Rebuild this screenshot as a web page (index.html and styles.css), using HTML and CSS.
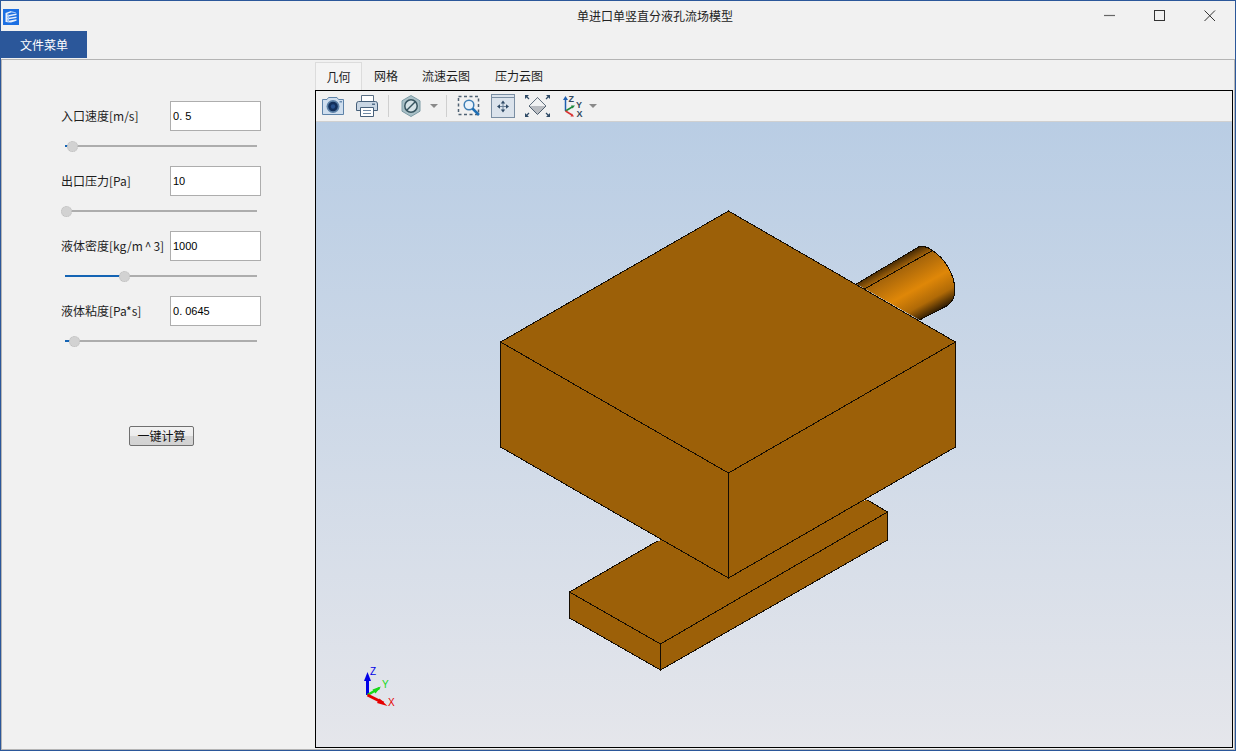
FILE: index.html
```html
<!DOCTYPE html>
<html lang="zh">
<head>
<meta charset="utf-8">
<title>单进口单竖直分液孔流场模型</title>
<link rel="stylesheet" href="styles.css">
</head>
<body>
<div class="window">
  <header class="titlebar">
    <svg class="app-icon" width="16" height="16" viewBox="0 0 16 16">
      <rect width="16" height="16" fill="#1b6fe3"/>
      <path d="M2.500 4 8 2V3.500L4.500 4.800V6.200L13.500 4.500V6L4.500 7.700V9.100L13.500 7.400V8.900L4.500 10.600V12L13.500 10.300V11.800L8 13.500 2.500 13Z" fill="#e8f0fc"/>
      <path d="M8 2 13 3.500V4.200L8 3.500ZM4.500 5.500H6V13.300H4.500Z" fill="#a7c8f6"/>
    </svg>
    <div class="title">单进口单竖直分液孔流场模型</div>
    <div class="controls">
      <div class="control"><svg width="12" height="12" viewBox="0 0 12 12"><path d="M0 5.500H11" stroke="#666" stroke-width="1.200"/></svg></div>
      <div class="control"><svg width="12" height="12" viewBox="0 0 12 12"><rect x=".5" y=".5" width="10" height="10" fill="none" stroke="#333"/></svg></div>
      <div class="control"><svg width="12" height="12" viewBox="0 0 12 12"><path d="M.5.500 11 11M11 .5.500 11" stroke="#333" fill="none"/></svg></div>
    </div>
  </header>
  <nav class="menubar"><div class="menu-tab">文件菜单</div></nav>
  <main class="frame">
    <aside class="panel">
      <div class="field">
        <div class="field-row"><label class="field-label">入口速度[m/s]</label><div class="field-input">0<span class="wide-dot">.</span>5</div></div>
        <div class="slider"><div class="slider-fill" style="width:7px"></div><div class="slider-thumb" style="left:2px"></div></div>
      </div>
      <div class="field">
        <div class="field-row"><label class="field-label">出口压力[Pa]</label><div class="field-input">10</div></div>
        <div class="slider"><div class="slider-fill" style="width:1px"></div><div class="slider-thumb" style="left:-4px"></div></div>
      </div>
      <div class="field">
        <div class="field-row"><label class="field-label">液体密度[kg/m<span class="caret">^</span>3]</label><div class="field-input">1000</div></div>
        <div class="slider"><div class="slider-fill" style="width:59px"></div><div class="slider-thumb" style="left:54px"></div></div>
      </div>
      <div class="field">
        <div class="field-row"><label class="field-label">液体粘度[Pa*s]</label><div class="field-input">0<span class="wide-dot">.</span>0645</div></div>
        <div class="slider"><div class="slider-fill" style="width:9px"></div><div class="slider-thumb" style="left:4px"></div></div>
      </div>
      <button class="run-btn">一键计算</button>
    </aside>
    <section class="workspace">
      <div class="tabs">
        <div class="tab tab-active">几何</div>
        <div class="tab">网格</div>
        <div class="tab">流速云图</div>
        <div class="tab">压力云图</div>
      </div>
      <div class="viewer">
        <div class="toolbar">
          <div class="tool">
            <svg width="24" height="20" viewBox="0 0 24 20">
              <path d="M1.500 3.500H6L7.500 1.500H16L17.500 3.500H22.500V18.500H1.500Z" fill="#cfdeee" stroke="#5d82a8"/>
              <rect x="18.500" y="5" width="2.500" height="1.500" fill="#6c8db0"/>
              <circle cx="12" cy="10.500" r="6.500" fill="#5d82a8"/>
              <circle cx="12" cy="10.500" r="4.800" fill="#13305c"/>
              <circle cx="12" cy="10.500" r="2.200" fill="#27508c"/>
            </svg>
          </div>
          <div class="tool">
            <svg width="24" height="24" viewBox="0 0 24 24">
              <path d="M6.500 8V1.500H18.500V8" fill="#fff" stroke="#5a6f84"/>
              <path d="M3.500 7.500H20.500Q22.500 7.500 22.500 10V16.500H1.500V10Q1.500 7.500 3.500 7.500Z" fill="#c9d6e3" stroke="#47607a"/>
              <rect x="17" y="9.500" width="3" height="1.500" fill="#55708c"/>
              <path d="M5.500 13.500H18.500V22.500H5.500Z" fill="#fff" stroke="#47607a"/>
              <path d="M8 16.500H16M8 19.500H16" stroke="#6f8aa5"/>
            </svg>
          </div>
          <div class="tool-sep"></div>
          <div class="tool tool-hex">
            <svg width="20" height="22" viewBox="0 0 20 22">
              <path d="M10 .5 19 5.800V16.200L10 21.500 1 16.200V5.800Z" fill="#a9c0c7" stroke="#7c9ba5"/>
              <circle cx="10" cy="11" r="6.200" fill="#d5e2e6" stroke="#37545f" stroke-width="1.500"/>
              <path d="M6 15 14 7" stroke="#37545f" stroke-width="1.500"/>
            </svg>
          </div>
          <div class="tool-arrow"></div>
          <div class="tool-sep tool-sep-wide"></div>
          <div class="tool">
            <svg width="24" height="24" viewBox="0 0 24 24">
              <rect x="1.500" y="2.500" width="20" height="18" fill="none" stroke="#4f6273" stroke-width="1.500" stroke-dasharray="3 2.500"/>
              <circle cx="12" cy="11" r="4.800" fill="#eaf3fb" stroke="#3f7fb5" stroke-width="1.500"/>
              <path d="M15.500 14.500 22 21" stroke="#1f6fb5" stroke-width="2.500"/>
            </svg>
          </div>
          <div class="tool">
            <svg width="24" height="24" viewBox="0 0 24 24">
              <rect x=".5" y=".5" width="23" height="23" fill="#dbe3ec" stroke="#7a8ea3"/>
              <path d="M1 3.500H23" stroke="#7a8ea3"/>
              <path d="M12 9V16M8.500 12.500H15.500" stroke="#6b8097"/>
              <path d="M12 6.500 9.800 9.500H14.200ZM12 18.500 9.800 15.500H14.200ZM6 12.500 9 10.300V14.700ZM18 12.500 15 10.300V14.700Z" fill="#2f4a66"/>
            </svg>
          </div>
          <div class="tool">
            <svg width="28" height="24" viewBox="0 0 28 24">
              <path d="M14.500 3.500 23 12 14.500 20.500 6 12Z" fill="#b9bcc1" stroke="#4e5e6e"/>
              <path d="M14.500 4 22.500 12H6.500Z" fill="#f1f2f3"/>
              <path d="M3 2 6 5M26 2 23 5M3 22 6 19M26 22 23 19" stroke="#2f4a66" stroke-width="1.200"/>
              <path d="M2 1H6L2 5ZM27 1H23L27 5ZM2 23H6L2 19ZM27 23H23L27 19Z" fill="#2f4a66"/>
            </svg>
          </div>
          <div class="tool tool-axes">
            <svg width="22" height="24" viewBox="0 0 22 24">
              <path d="M4.500 4V17" stroke="#1f5fb0" stroke-width="1.500"/>
              <path d="M4.500 2 2 6H7Z" fill="#1f5fb0"/>
              <path d="M4.500 17 12 12.500" stroke="#1f8a3c" stroke-width="1.500"/>
              <path d="M14 11.500 10 11.500 11.500 14.500Z" fill="#1f8a3c"/>
              <path d="M4.500 17 11 21" stroke="#d93434" stroke-width="1.500"/>
              <path d="M13 22.500 9.500 22.500 11 19.500Z" fill="#d93434"/>
              <text class="axis-letter" x="7.500" y="7.500">Z</text>
              <text class="axis-letter" x="15" y="13.500">Y</text>
              <text class="axis-letter" x="15.500" y="22.500">X</text>
            </svg>
          </div>
          <div class="tool-arrow tool-arrow-last"></div>
        </div>
        <div class="canvas">
          <svg class="scene" viewBox="316.500 122 916 625" preserveAspectRatio="none">
            <defs>
              <linearGradient id="cyl" gradientUnits="userSpaceOnUse" x1="888" y1="262" x2="921" y2="321">
                <stop offset="0" stop-color="#2e1b02"/>
                <stop offset=".18" stop-color="#a5640a"/>
                <stop offset=".55" stop-color="#df8708"/>
                <stop offset=".8" stop-color="#b06a07"/>
                <stop offset="1" stop-color="#2a1903"/>
              </linearGradient>
            </defs>
            <path d="M857 284 919 247Q926 245 932 250 945 258 951 272 956 282 955 292 955 301 947 306L920 320Z" fill="url(#cyl)"/>
            <path class="edge" d="M857 284 919 247Q926 245 932 250 945 258 951 272 956 282 955 292 955 301 947 306L920 320" />
            <path class="edge" d="M865 289 932 251"/>
            <path class="solid" d="M570 592 658 541 868 500 888 512V540L661 670 570 618Z"/>
            <path class="edge" d="M658 541 570 592 661 644 888 512 868 500M570 592V618L661 670 888 540V512M661 644V670"/>
            <path class="solid" d="M729 211 956 342V447L729 578 501 447V342Z"/>
            <path class="edge" d="M729 211 956 342V447L729 578 501 447V342ZM501 342 729 473 956 342M729 473V578"/>
            <path class="axis-z" d="M368 695V676"/>
            <path class="head-z" d="M368 672 364.500 681H371.500Z"/>
            <path class="axis-y" d="M368 695 380 688"/>
            <path class="head-y" d="M381.500 686.500 373 689.500 376 693.500Z"/>
            <path class="axis-x" d="M368 695 384 703"/>
            <path class="head-x" d="M388 706 380 698.500 377.500 703Z"/>
            <text class="triad triad-z" x="370.500" y="675">Z</text>
            <text class="triad triad-y" x="382.500" y="688">Y</text>
            <text class="triad triad-x" x="388.500" y="706">X</text>
          </svg>
        </div>
      </div>
    </section>
  </main>
</div>
</body>
</html>
```

FILE: styles.css
```css
* { box-sizing: border-box; }
html, body { margin: 0; padding: 0; height: 100%; overflow: hidden; }
body {
  font-family: "Noto Sans CJK SC", "Liberation Sans", sans-serif;
  font-size: 12px;
  color: #1e1e1e;
  background: #f1f1f1;
}
.window {
  width: 1236px;
  height: 751px;
  display: flex;
  flex-direction: column;
  border: 1px solid #2b579a;
  background: #f1f1f1;
}
.titlebar {
  height: 30px;
  flex: none;
  display: flex;
  align-items: center;
}
.app-icon { margin: 1px 0 0 2px; flex: none; }
.title {
  flex: 1;
  text-align: center;
  padding-left: 206px;
  color: #222;
  line-height: 30px;
}
.controls { display: flex; flex: none; }
.control {
  width: 50px;
  height: 30px;
  display: flex;
  align-items: center;
  justify-content: center;
}
.menubar { height: 27px; flex: none; display: flex; }
.menu-tab {
  width: 86px;
  background: #2b579a;
  color: #fff;
  text-align: center;
  line-height: 27px;
}
.frame {
  flex: 1;
  min-height: 0;
  display: flex;
  margin-top: 1px;
  border: 1px solid #b4b4b4;
  background: #f1f1f1;
}
.panel {
  width: 313px;
  flex: none;
  display: flex;
  flex-direction: column;
  padding: 41px 0 0 59px;
}
.field { height: 65px; }
.field-row { display: flex; align-items: center; height: 30px; }
.field-label {
  width: 109px;
  flex: none;
  white-space: nowrap;
  line-height: 30px;
}
.caret { margin: 0 2px; }
.field-input {
  width: 91px;
  height: 30px;
  border: 1px solid #adadad;
  background: #fff;
  padding-left: 2px;
  font-family: "Liberation Sans", sans-serif;
  font-size: 11px;
  line-height: 29px;
  color: #000;
}
.wide-dot { letter-spacing: 3px; }
.slider {
  position: relative;
  width: 192px;
  height: 14px;
  margin: 8px 0 0 4px;
  background: linear-gradient(#adadad, #adadad) center / 100% 2px no-repeat;
}
.slider-fill {
  position: absolute;
  left: 0;
  top: 6px;
  height: 2px;
  background: #1464b4;
}
.slider-thumb {
  position: absolute;
  top: 2px;
  width: 11px;
  height: 11px;
  border-radius: 50%;
  background: #d2d2d2;
  border: 1px dotted #bdbdbd;
}
.run-btn {
  align-self: flex-start;
  width: 65px;
  height: 20px;
  margin: 65px 0 0 68px;
  padding: 0;
  border: 1px solid #707070;
  border-radius: 2px;
  background: linear-gradient(#f2f2f2 0%, #ececec 50%, #d6d6d6 51%, #d2d2d2 100%);
  font: inherit;
  line-height: 18px;
  color: #111;
}
.workspace {
  flex: 1;
  min-width: 0;
  display: flex;
  flex-direction: column;
}
.tabs { height: 30px; flex: none; display: flex; padding-top: 2px; }
.tab { padding: 0 12px; line-height: 28px; color: #1e1e1e; white-space: nowrap; }
.tab:last-child { margin-left: 1px; }
.tab-active {
  width: 47px;
  padding: 0;
  text-align: center;
  background: #f4f4f4;
  border: 1px solid #dcdcdc;
  border-bottom: none;
  line-height: 27px;
}
.viewer {
  flex: 1;
  min-height: 0;
  display: flex;
  flex-direction: column;
  border: 1px solid #000;
  margin-right: 1px;
  margin-bottom: 1px;
}
.toolbar {
  height: 31px;
  flex: none;
  display: flex;
  align-items: center;
  background: #f1f1f1;
  border-bottom: 1px solid #d0d0d0;
}
.tool {
  width: 34px;
  height: 30px;
  flex: none;
  display: flex;
  align-items: center;
  justify-content: center;
}
.tool-hex { margin-left: 5px; }
.tool-sep { width: 1px; height: 22px; margin-left: 4px; background: #cfcfcf; flex: none; }
.tool-sep-wide { margin-left: 8px; margin-right: 5px; }
.tool-arrow {
  width: 0;
  height: 0;
  margin-left: 2px;
  border-left: 4px solid transparent;
  border-right: 4px solid transparent;
  border-top: 4px solid #8a8a8a;
  flex: none;
}
.tool-axes { margin-left: 1px; }
.tool-arrow-last { margin-left: 0; }
.axis-letter { font-family: "Liberation Sans", sans-serif; font-size: 9px; font-weight: 700; fill: #33495e; }
.canvas {
  flex: 1;
  min-height: 0;
  background: linear-gradient(#b9cde4 0%, #e5e6eb 100%);
}
.scene { display: block; width: 100%; height: 100%; }
.solid { fill: #9c6008; shape-rendering: crispEdges; }
.edge { fill: none; stroke: #140c02; stroke-width: 1; shape-rendering: crispEdges; }
.axis-z { stroke: #0000e6; stroke-width: 3; fill: none; }
.axis-y { stroke: #18d818; stroke-width: 2.500; fill: none; }
.axis-x { stroke: #e60000; stroke-width: 3; fill: none; }
.head-z { fill: #0000e6; }
.head-y { fill: #18d818; }
.head-x { fill: #e60000; }
.triad { font-family: "Liberation Sans", sans-serif; font-size: 10px; }
.triad-z { fill: #0000e6; }
.triad-y { fill: #18d818; }
.triad-x { fill: #e60000; }
```
